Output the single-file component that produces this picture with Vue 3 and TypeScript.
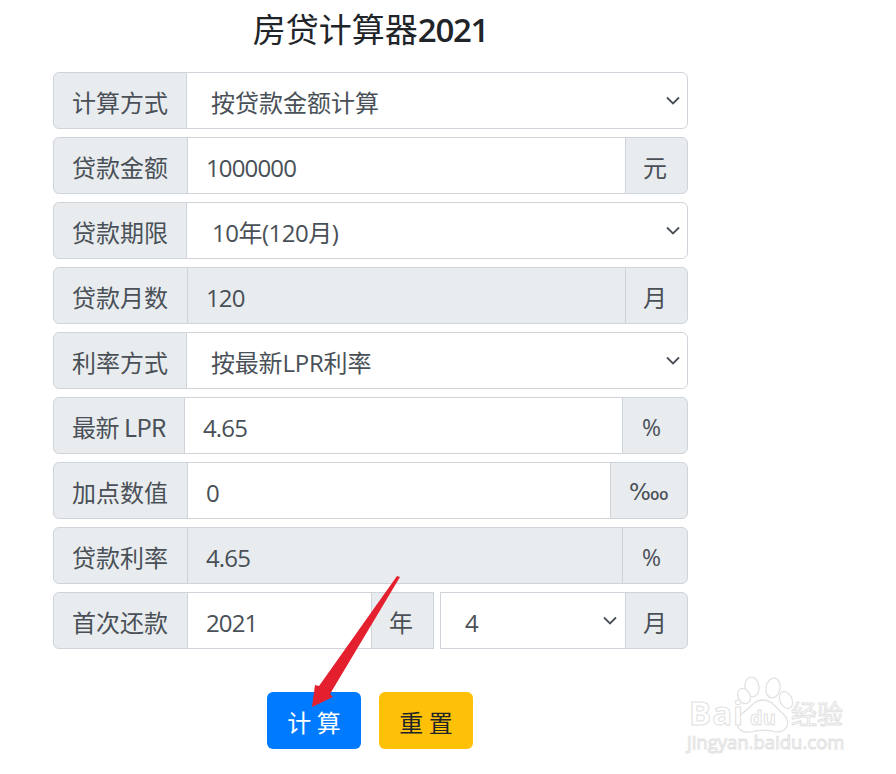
<script setup lang="ts">
interface Row {
  label: string
  kind: 'select' | 'input' | 'readonly'
  value: string
  addon?: string
  addonClass?: string
  labelClass?: string
  controlClass?: string
}

const rows: Row[] = [
  { label: '计算方式', kind: 'select', value: '按贷款金额计算', labelClass: 'label-narrow' },
  { label: '贷款金额', kind: 'input', value: '1000000', addon: '元' },
  { label: '贷款期限', kind: 'select', value: '10年(120月)', labelClass: 'label-narrow', controlClass: 'select-mixed' },
  { label: '贷款月数', kind: 'readonly', value: '120', addon: '月' },
  { label: '利率方式', kind: 'select', value: '按最新LPR利率', labelClass: 'label-narrow', controlClass: 'select-lpr' },
  { label: '最新 LPR', kind: 'input', value: '4.65', addon: '%', addonClass: 'addon-pct', labelClass: 'label-lpr' },
  { label: '加点数值', kind: 'input', value: '0', addon: '‱', addonClass: 'addon-permyriad' },
  { label: '贷款利率', kind: 'readonly', value: '4.65', addon: '%', addonClass: 'addon-pct' },
]
</script>

<template>
  <div class="page">
    <main class="calc">
      <h1 class="title">房贷计算器<span class="title-year">2021</span></h1>

      <div v-for="row in rows" :key="row.label" class="row">
        <span class="label" :class="row.labelClass">{{ row.label }}</span>
        <select v-if="row.kind === 'select'" class="control select" :class="row.controlClass">
          <option>{{ row.value }}</option>
        </select>
        <input
          v-else
          class="control"
          :class="{ readonly: row.kind === 'readonly' }"
          :readonly="row.kind === 'readonly'"
          :value="row.value"
        />
        <span v-if="row.addon" class="addon" :class="row.addonClass">{{ row.addon }}</span>
      </div>

      <div class="row">
        <span class="label">首次还款</span>
        <input class="control" value="2021" />
        <span class="addon addon-mid">年</span>
        <select class="control select select-month"><option>4</option></select>
        <span class="addon">月</span>
      </div>

      <div class="actions">
        <button class="btn btn-primary" type="button">计 算</button>
        <button class="btn btn-warning" type="button">重 置</button>
      </div>
    </main>

    <svg class="overlay" width="896" height="774" viewBox="0 0 896 774" aria-hidden="true">
      <polygon
        fill="#e4202f"
        points="397,576 400,577 330,694 333,697 312,707 315,685 319,686"
      />
      <g class="wm-line">
        <ellipse cx="752" cy="687" rx="7" ry="10" transform="rotate(-8 752 687)" />
        <ellipse cx="773" cy="688" rx="7" ry="10" transform="rotate(10 773 688)" />
        <ellipse cx="786" cy="700" rx="6" ry="9" transform="rotate(-25 786 700)" />
        <ellipse cx="744" cy="696" rx="6" ry="8" transform="rotate(-25 744 696)" />
        <path d="M763 700c8 0 12 6 17 11 6 5 9 9 7 15-2 6-9 7-15 5-5-1-12-1-17 0-6 2-14 2-17-4-2-6 0-11 6-15 7-5 10-12 19-12z" />
      </g>
      <text class="wm-text wm-big" x="689" y="725">Bai</text>
      <text class="wm-text wm-du" x="750" y="725">du</text>
      <text class="wm-text wm-cn" x="791" y="724">经验</text>
      <text class="wm-text wm-url" x="687" y="749">jingyan.baidu.com</text>
    </svg>
  </div>
</template>

<style scoped>
.page {
  position: relative;
  width: 896px;
  height: 774px;
  overflow: hidden;
  background: #fff;
  font-family: "Open Sans", "Noto Sans CJK SC", sans-serif;
}

.calc {
  width: 635px;
  margin-left: 53px;
  display: flex;
  flex-direction: column;
}

.title {
  height: 72px;
  margin: 0;
  padding-top: 4px;
  box-sizing: border-box;
  text-align: center;
  font-family: "Noto Sans CJK SC", sans-serif;
  font-size: 33px;
  line-height: 48px;
  font-weight: 400;
  color: #212529;
}

.title-year {
  font-family: "Open Sans", sans-serif;
  font-weight: 600;
  letter-spacing: -1.3px;
}

.row {
  display: flex;
  height: 57px;
  margin-bottom: 8px;
  font-size: 24px;
  color: #495057;
}

.label,
.addon {
  display: flex;
  align-items: center;
  box-sizing: border-box;
  flex: none;
  background: #e9ecef;
  border: 1px solid #ced4da;
  white-space: pre;
}

.label {
  width: 135px;
  padding: 1px 0 0 18px;
  border-radius: 6px 0 0 6px;
  font-family: "Noto Sans CJK SC", sans-serif;
}

.label-narrow {
  width: 134px;
}

.label-lpr {
  width: 132px;
  letter-spacing: -0.5px;
}

.addon {
  width: 63px;
  padding: 2px 0 0 17px;
  margin-left: -1px;
  border-radius: 0 6px 6px 0;
  font-family: "Noto Sans CJK SC", sans-serif;
}

.addon-pct {
  width: 66px;
  padding-left: 19px;
  font-family: "Open Sans", sans-serif;
  font-size: 23px;
}

.addon-permyriad {
  width: 78px;
  padding-left: 18px;
  font-family: "DejaVu Sans", sans-serif;
  font-size: 23px;
  letter-spacing: -3px;
}

.addon-mid {
  width: 63px;
  margin-right: 7px;
  border-radius: 0;
}

.control {
  flex: 1 1 0;
  min-width: 0;
  height: 57px;
  box-sizing: border-box;
  padding: 3px 12px 0 18px;
  margin-left: -1px;
  background: #fff;
  border: 1px solid #ced4da;
  border-radius: 0;
  outline: none;
  font-family: "Open Sans", "Noto Sans CJK SC", sans-serif;
  font-size: 24px;
  letter-spacing: -0.85px;
  color: #495057;
}

.readonly {
  background: #e9ecef;
}

.select {
  appearance: none;
  padding-left: 24px;
  border-radius: 0 6px 6px 0;
  letter-spacing: 0;
  background-color: #fff;
  background-image: url("data:image/svg+xml,%3Csvg xmlns='http://www.w3.org/2000/svg' width='14' height='9' viewBox='0 0 14 9'%3E%3Cpath d='M1 1.5l6 6 6-6' fill='none' stroke='%23495057' stroke-width='1.8'/%3E%3C/svg%3E");
  background-repeat: no-repeat;
  background-position: right 7px center;
}

.select-mixed {
  padding-left: 25px;
  letter-spacing: -0.5px;
}

.select-lpr {
  letter-spacing: -0.2px;
}

.select-month {
  flex: none;
  width: 186px;
  border-radius: 0;
  padding-left: 24px;
  background-position: right 8px center;
}

.actions {
  display: flex;
  justify-content: center;
  gap: 18px;
  margin: 35px 0 0 -1px;
}

.btn {
  width: 94px;
  height: 57px;
  border: 0;
  border-radius: 6px;
  padding: 2px 0 0;
  font-family: "Noto Sans CJK SC", sans-serif;
  font-size: 24px;
  white-space: pre;
}

.btn-primary {
  background: #007bff;
  color: #fff;
}

.btn-warning {
  background: #ffc107;
  color: #212529;
}

.overlay {
  position: absolute;
  inset: 0;
  pointer-events: none;
}

.wm-line {
  fill: #fff;
  stroke: #e2e2e2;
  stroke-width: 1.3;
}

.wm-text {
  fill: #fff;
  stroke: #e2e2e2;
  stroke-width: 1;
  font-family: "Open Sans", "Noto Sans CJK SC", sans-serif;
}

.wm-big {
  font-size: 33px;
  font-weight: 700;
  letter-spacing: 1px;
}

.wm-du {
  font-size: 20px;
  font-weight: 700;
}

.wm-cn {
  font-size: 26px;
  font-family: "Noto Sans CJK SC", sans-serif;
}

.wm-url {
  font-size: 18.5px;
}
</style>
